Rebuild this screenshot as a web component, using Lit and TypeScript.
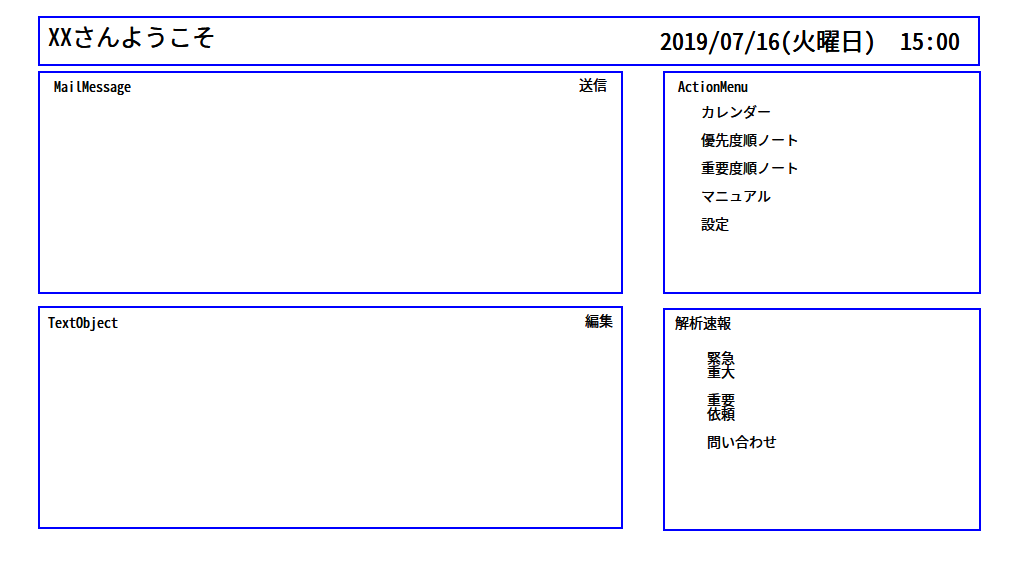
import { LitElement, html, css } from "lit";
import { customElement, property } from "lit/decorators.js";

@customElement("app-panel")
class AppPanel extends LitElement {
  @property() heading = "";
  @property() action = "";

  static styles = css`
    :host {
      display: block;
      box-sizing: border-box;
      min-height: 223px;
      border: 2px solid #00f;
      padding: 6px 8px;
    }
    .bar {
      display: flex;
      justify-content: space-between;
      align-items: flex-start;
    }
    .title {
      margin: 0;
      font-size: 14px;
      line-height: 16px;
      font-weight: 500;
    }
    .action {
      margin: 0;
      padding: 0;
      border: 0;
      background: none;
      color: inherit;
      font: inherit;
      line-height: 12px;
      text-shadow: inherit;
      cursor: pointer;
    }
  `;

  render() {
    return html`
      <div class="bar">
        <h2 class="title">${this.heading}</h2>
        ${this.action ? html`<button class="action" type="button">${this.action}</button>` : ""}
      </div>
      <slot></slot>
    `;
  }
}

@customElement("app-root")
class AppRoot extends LitElement {
  menu = ["カレンダー", "優先度順ノート", "重要度順ノート", "マニュアル", "設定"];
  reports = [["緊急", "重大"], ["重要", "依頼"], ["問い合わせ"]];

  static styles = css`
    :host {
      display: block;
      box-sizing: border-box;
      min-height: 100vh;
      padding: 16px 29px 16px 38px;
      background: #fff;
      color: #000;
      font-family: "Noto Sans Mono CJK JP", "Noto Sans CJK JP", monospace;
      font-size: 14px;
      line-height: 14px;
      font-weight: 500;
      text-shadow: 0 0 0 #000;
    }
    .header {
      display: flex;
      justify-content: space-between;
      box-sizing: border-box;
      min-height: 50px;
      margin: 0 1px 5px 0;
      padding: 5px 18px 5px 8px;
      border: 2px solid #00f;
    }
    .welcome {
      margin: 0;
      font-size: 24px;
      line-height: 26px;
      font-weight: 500;
    }
    .clock {
      padding-top: 4px;
      font-size: 24px;
      line-height: 26px;
      white-space: pre;
      text-shadow: 0 0 0 #000, 0 0 0 #000;
    }
    .columns {
      display: grid;
      grid-template-columns: 585fr 318fr;
      column-gap: 40px;
      align-items: start;
    }
    .main {
      display: grid;
      gap: 12px;
    }
    .side {
      display: grid;
      gap: 14px;
    }
    .mail {
      padding: 5px 14px;
    }
    .actions {
      padding: 5px 13px;
    }
    .analysis {
      padding: 4px 10px;
    }
    .list {
      display: grid;
      gap: 14px;
      margin: 0;
      padding: 0;
      list-style: none;
    }
    .menu {
      padding: 10px 0 0 23px;
    }
    .reports {
      padding: 20px 0 0 32px;
    }
    .link {
      display: block;
      width: max-content;
      color: inherit;
      text-decoration: none;
    }
  `;

  render() {
    return html`
      <header class="header">
        <h1 class="welcome">XXさんようこそ</h1>
        <time class="clock" datetime="2019-07-16T15:00">2019/07/16(火曜日)　15:00</time>
      </header>
      <div class="columns">
        <main class="main">
          <app-panel class="mail" heading="MailMessage" action="送信"></app-panel>
          <app-panel heading="TextObject" action="編集"></app-panel>
        </main>
        <aside class="side">
          <app-panel class="actions" heading="ActionMenu">
            <nav>
              <ul class="list menu">
                ${this.menu.map((m) => html`<li><a class="link" href="#">${m}</a></li>`)}
              </ul>
            </nav>
          </app-panel>
          <app-panel class="analysis" heading="解析速報">
            <ul class="list reports">
              ${this.reports.map(
                (g) => html`<li>${g.map((r) => html`<a class="link" href="#">${r}</a>`)}</li>`
              )}
            </ul>
          </app-panel>
        </aside>
      </div>
    `;
  }
}
